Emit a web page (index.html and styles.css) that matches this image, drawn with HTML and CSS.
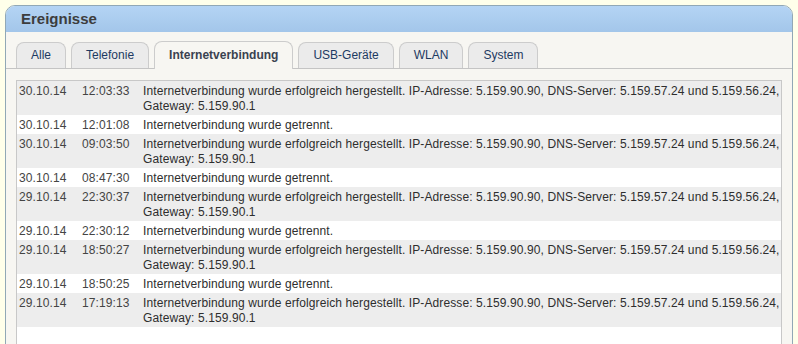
FILE: index.html
```html
<!DOCTYPE html>
<html lang="de">
<head>
    <meta charset="UTF-8">
    <title>Ereignisse</title>
    <link rel="stylesheet" href="styles.css">
</head>
<body>
    <div class="panel">
        <div class="panel-head">
            <h2>Ereignisse</h2>
        </div>
        <div class="panel-body">
            <ul class="tabs">
                <li>Alle</li>
                <li>Telefonie</li>
                <li class="active">Internetverbindung</li>
                <li>USB-Geräte</li>
                <li>WLAN</li>
                <li>System</li>
            </ul>
            <div class="log">
                <table>
                    <tr><td class="date">30.10.14</td><td class="time">12:03:33</td><td>Internetverbindung wurde erfolgreich hergestellt. IP-Adresse: 5.159.90.90, DNS-Server: 5.159.57.24 und 5.159.56.24, Gateway: 5.159.90.1</td></tr>
                    <tr><td class="date">30.10.14</td><td class="time">12:01:08</td><td>Internetverbindung wurde getrennt.</td></tr>
                    <tr><td class="date">30.10.14</td><td class="time">09:03:50</td><td>Internetverbindung wurde erfolgreich hergestellt. IP-Adresse: 5.159.90.90, DNS-Server: 5.159.57.24 und 5.159.56.24, Gateway: 5.159.90.1</td></tr>
                    <tr><td class="date">30.10.14</td><td class="time">08:47:30</td><td>Internetverbindung wurde getrennt.</td></tr>
                    <tr><td class="date">29.10.14</td><td class="time">22:30:37</td><td>Internetverbindung wurde erfolgreich hergestellt. IP-Adresse: 5.159.90.90, DNS-Server: 5.159.57.24 und 5.159.56.24, Gateway: 5.159.90.1</td></tr>
                    <tr><td class="date">29.10.14</td><td class="time">22:30:12</td><td>Internetverbindung wurde getrennt.</td></tr>
                    <tr><td class="date">29.10.14</td><td class="time">18:50:27</td><td>Internetverbindung wurde erfolgreich hergestellt. IP-Adresse: 5.159.90.90, DNS-Server: 5.159.57.24 und 5.159.56.24, Gateway: 5.159.90.1</td></tr>
                    <tr><td class="date">29.10.14</td><td class="time">18:50:25</td><td>Internetverbindung wurde getrennt.</td></tr>
                    <tr><td class="date">29.10.14</td><td class="time">17:19:13</td><td>Internetverbindung wurde erfolgreich hergestellt. IP-Adresse: 5.159.90.90, DNS-Server: 5.159.57.24 und 5.159.56.24, Gateway: 5.159.90.1</td></tr>
                </table>
            </div>
        </div>
    </div>
</body>
</html>
```

FILE: styles.css
```css
html {
    overflow: hidden;
}
body {
    margin: 0;
    padding: 5px 5px 0 5px;
    background-color: #ffffea;
    font-family: "Liberation Sans", Arial, sans-serif;
    font-size: 12px;
    color: #333;
}
.panel {
    border: 1px solid #91a8b6;
    border-radius: 10px 10px 0 0;
    background-color: #f7f6f2;
    overflow: hidden;
}
.panel-head {
    height: 26px;
    padding: 0 15px;
    background: linear-gradient(to bottom, #b4d4f4, #a3c6ea);
}
.panel-head h2 {
    margin: 0;
    font-size: 15px;
    line-height: 26px;
    font-weight: bold;
    color: #3d3d3d;
}
.panel-body {
    padding: 10px 10px 0 10px;
}
.tabs {
    display: flex;
    align-items: flex-end;
    list-style: none;
    margin: 0 -10px;
    padding: 0 10px;
    height: 26px;
    border-bottom: 1px solid #c4c4c4;
}
.tabs li {
    height: 25px;
    line-height: 25px;
    padding: 0 14px;
    margin-right: 5px;
    border: 1px solid #cccccc;
    border-bottom: none;
    border-radius: 8px 8px 0 0;
    background-color: #ebebeb;
    color: #1d3a62;
}
.tabs li.active {
    height: 27px;
    line-height: 27px;
    margin-bottom: -1px;
    background-color: #f7f6f2;
    font-weight: bold;
    color: #3a4250;
}
.log {
    margin-top: 11px;
    border: 1px solid #c8c8c8;
    background-color: #fff;
    min-height: 300px;
}
.log table {
    width: 100%;
    border-collapse: collapse;
}
.log td {
    padding: 3px 1px 1px 2px;
    line-height: 15px;
    letter-spacing: 0.1px;
    vertical-align: top;
    color: #2e2e2e;
}
.log tr:nth-child(odd) {
    background-color: #ededed;
}
.log td.date {
    width: 60px;
    color: #444;
}
.log td.time {
    width: 58px;
    color: #444;
}
```
